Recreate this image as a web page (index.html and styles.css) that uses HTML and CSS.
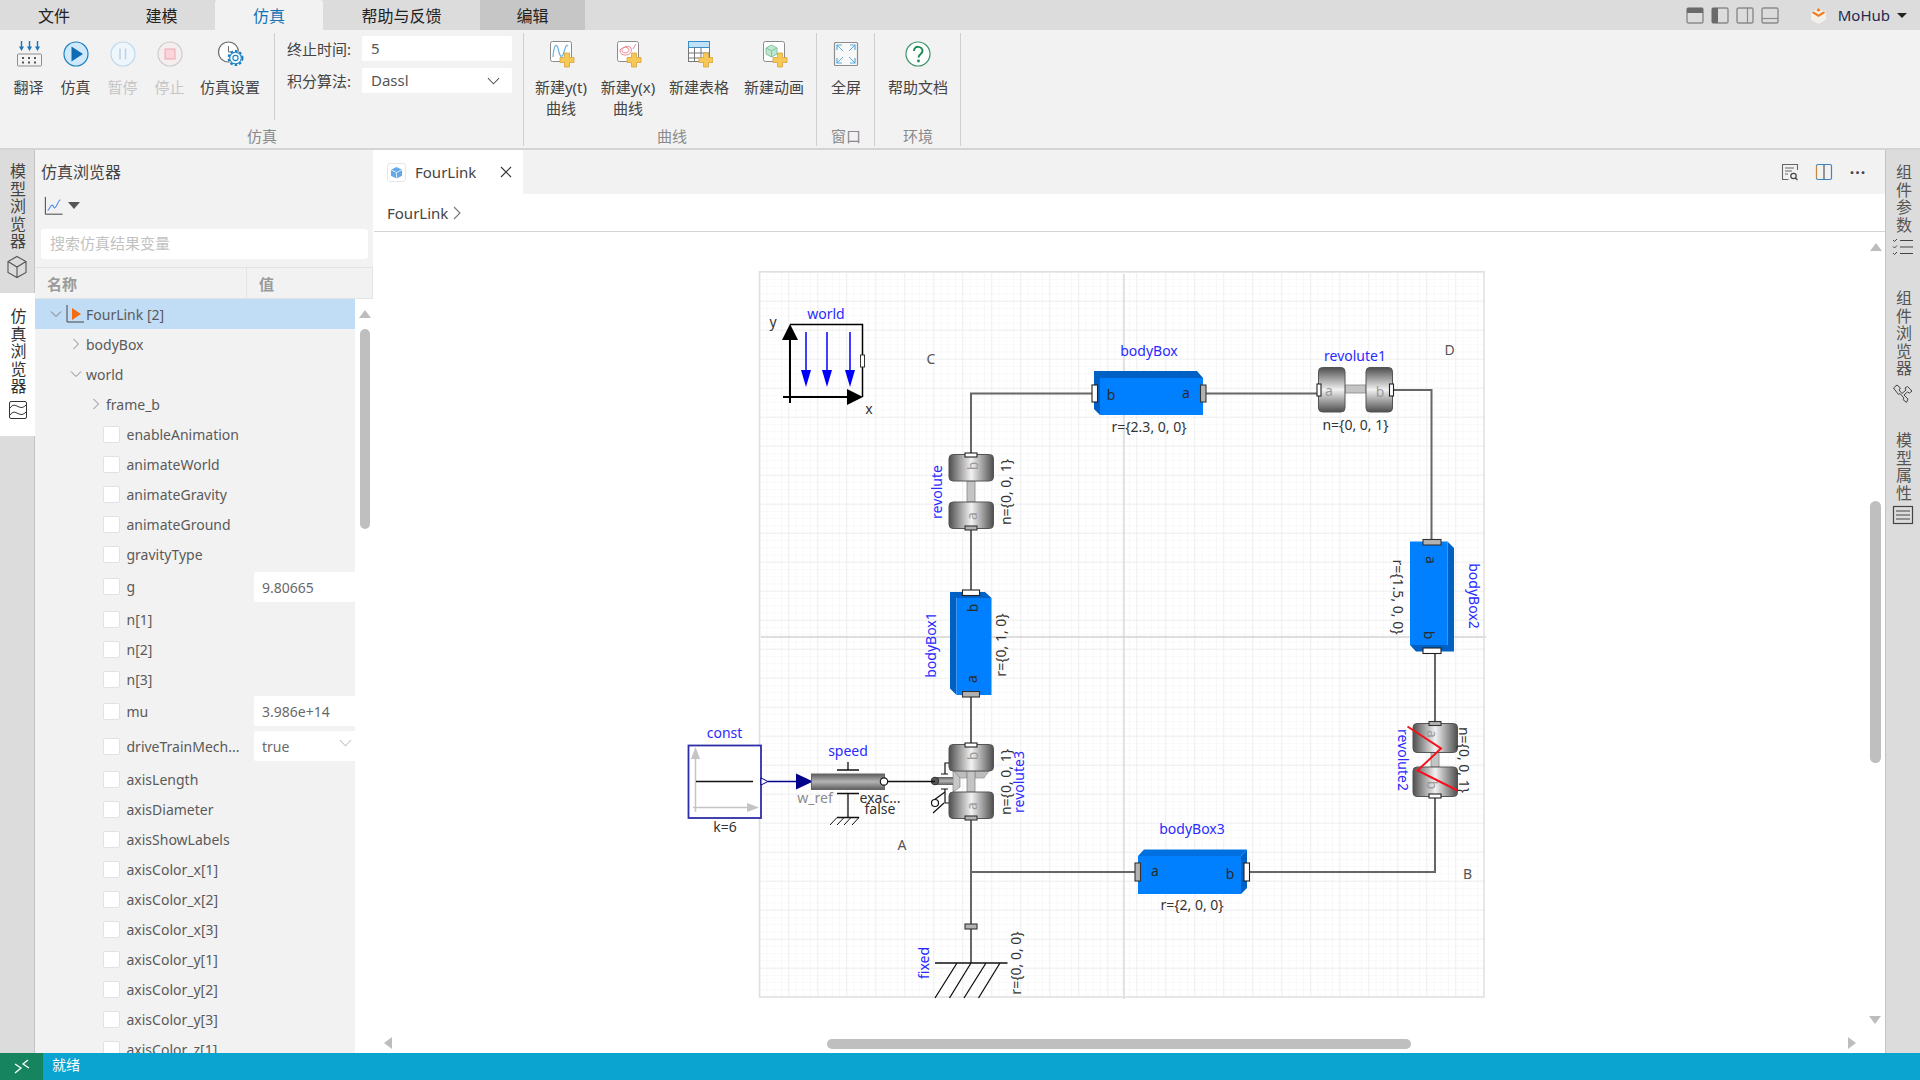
FILE: index.html
```html
<!DOCTYPE html>
<html lang="zh-CN">
<head>
<meta charset="utf-8">
<title>FourLink</title>
<link rel="stylesheet" href="styles.css">
</head>
<body>
<div class="app">
  <header class="menubar">
    <div class="menu-tab w108">文件</div>
    <div class="menu-tab w107">建模</div>
    <div class="menu-tab w108 active">仿真</div>
    <div class="menu-tab w157">帮助与反馈</div>
    <div class="menu-tab w105 edit">编辑</div>
    <div class="menu-right">
      <svg class="win-ic" viewBox="0 0 18 17"><rect x="1" y="1" width="16" height="15" rx="1.500" fill="none" stroke="#8a8a8a" stroke-width="1.400"/><rect x="1" y="1" width="16" height="5" fill="#6a6a6a"/></svg>
      <svg class="win-ic" viewBox="0 0 18 17"><rect x="1" y="1" width="16" height="15" rx="1.500" fill="none" stroke="#8a8a8a" stroke-width="1.400"/><rect x="1" y="1" width="6" height="15" fill="#6a6a6a"/></svg>
      <svg class="win-ic" viewBox="0 0 18 17"><rect x="1" y="1" width="16" height="15" rx="1.500" fill="none" stroke="#8a8a8a" stroke-width="1.400"/><path d="M11.500 1v15" stroke="#8a8a8a" stroke-width="1.200"/></svg>
      <svg class="win-ic" viewBox="0 0 18 17"><rect x="1" y="1" width="16" height="15" rx="1.500" fill="none" stroke="#8a8a8a" stroke-width="1.400"/><path d="M1 11.500h16" stroke="#8a8a8a" stroke-width="1.200"/></svg>
      <svg class="logo" viewBox="0 0 16 16"><path d="M8 1.500 15 5V12L8 16 1 12V5z" fill="#f3efeb"/><path d="M1.500 5.500 8 9.500l6.500-4-2-1.300L8 7 3.500 4.200z" fill="#f47c20"/><path d="M8 1 10 3 8 4.500 6 3z" fill="#f47c20"/></svg>
      <span class="hub">MoHub</span>
      <span class="caret-dark"></span>
    </div>
  </header>

  <section class="ribbon">
    <div class="group g-sim">
      <div class="group-body">
        <div class="rb-item w47 first">
          <svg class="rb-ic" viewBox="0 0 28 28"><rect x="2.500" y="14" width="24" height="12" rx="1" fill="#f4f4f4" stroke="#8d8d8d"/><g fill="#555"><rect x="7" y="17" width="2" height="2"/><rect x="13" y="17" width="2" height="2"/><rect x="19" y="17" width="2" height="2"/><rect x="7" y="21.500" width="2" height="2"/><rect x="13" y="21.500" width="2" height="2"/><rect x="19" y="21.500" width="2" height="2"/></g><g stroke="#1b75bb" stroke-width="1.400" fill="#1b75bb"><path d="M6.500 1v6M14.500 1v6M22.500 1v6"/><path d="M4 6.500h5L6.500 11zM12 6.500h5L14.500 11zM20 6.500h5L22.500 11z" stroke="none"/></g></svg>
          <span>翻译</span>
        </div>
        <div class="rb-item w47">
          <svg class="rb-ic" viewBox="0 0 28 28"><circle cx="14" cy="14" r="12" fill="#cfe9fb" stroke="#1d80c3" stroke-width="1.200"/><path d="M9.500 6.500 21 14 9.500 21.500z" fill="#0f6cb3"/></svg>
          <span>仿真</span>
        </div>
        <div class="rb-item w47 dim">
          <svg class="rb-ic" viewBox="0 0 28 28"><circle cx="14" cy="14" r="12" fill="#eff6fb" stroke="#bcd9ee" stroke-width="1.200"/><path d="M11 8.500v11M16.500 8.500v11" stroke="#bcd4e6" stroke-width="1.600"/></svg>
          <span>暂停</span>
        </div>
        <div class="rb-item w47 dim">
          <svg class="rb-ic" viewBox="0 0 28 28"><circle cx="14" cy="14" r="12" fill="#f6eeee" stroke="#cdcdcd" stroke-width="1.200"/><rect x="9" y="9" width="10" height="10" fill="#f9d4da" stroke="#eaaab4"/></svg>
          <span>停止</span>
        </div>
        <div class="rb-item w74">
          <svg class="rb-ic" viewBox="0 0 28 28"><circle cx="12.500" cy="12" r="10" fill="#fff" stroke="#6f6f6f" stroke-width="1.200"/><path d="M12.500 6v6h4" fill="none" stroke="#6f6f6f"/><circle cx="19.500" cy="18" r="7" fill="#f2f2f2" stroke="#1d80c3" stroke-width="2" stroke-dasharray="2.600 2"/><circle cx="19.500" cy="18" r="5.800" fill="#f4f9fd" stroke="#1d80c3" stroke-width="1.100"/><circle cx="19.500" cy="18" r="2.600" fill="#fff" stroke="#1d80c3" stroke-width="1.100"/></svg>
          <span>仿真设置</span>
        </div>
        <div class="sim-sep"></div>
        <div class="form">
          <div class="form-row"><label>终止时间:</label><div class="input">5</div></div>
          <div class="form-row"><label>积分算法:</label><div class="input select">Dassl<svg class="chev" viewBox="0 0 14 8"><path d="M1 1l6 6 6-6" fill="none" stroke="#555" stroke-width="1.100"/></svg></div></div>
        </div>
      </div>
      <div class="group-label">仿真</div>
    </div>
    <div class="group g-curve">
      <div class="group-body">
        <div class="rb-item w68">
          <svg class="rb-ic" viewBox="0 0 28 28"><rect x="3.500" y="1.500" width="21" height="20" rx="2" fill="#fff" stroke="#8a8a8a"/><path d="M6 17C7 3 10 3 11.500 10S15 19 17 12 19 6 21 5" fill="none" stroke="#68b3e3" stroke-width="1.200"/><path class="plus" d="M17.500 13h5v4.500h4.500v5h-4.500V27h-5v-4.500H13v-5h4.500z"/></svg>
          <span>新建y(t)<br>曲线</span>
        </div>
        <div class="rb-item w66">
          <svg class="rb-ic" viewBox="0 0 28 28"><rect x="3.500" y="1.500" width="21" height="20" rx="2" fill="#fff" stroke="#8a8a8a"/><path d="M6 10c3-4 9-3 9 0s-6 4-7 1 5-6 8-4 1 8-4 8-6-2-6-5M19 9l3-5" fill="none" stroke="#ec8a93" stroke-width="1"/><path class="plus" d="M17.500 13h5v4.500h4.500v5h-4.500V27h-5v-4.500H13v-5h4.500z"/></svg>
          <span>新建y(x)<br>曲线</span>
        </div>
        <div class="rb-item w76">
          <svg class="rb-ic" viewBox="0 0 28 28"><rect x="3.500" y="1.500" width="21" height="20" fill="#fff" stroke="#777"/><rect x="3.500" y="1.500" width="21" height="6" fill="#bfe2fa" stroke="#3c8cc6"/><path d="M3.500 13h21M3.500 18h21M9.500 7.500v14M16 7.500v14" stroke="#777" fill="none"/><path class="plus" d="M18.500 13h5v4.500h4.500v5h-4.500V27h-5v-4.500H14v-5h4.500z"/></svg>
          <span>新建表格</span>
        </div>
        <div class="rb-item w74">
          <svg class="rb-ic" viewBox="0 0 28 28"><rect x="3.500" y="1.500" width="21" height="20" rx="2" fill="#fff" stroke="#8a8a8a"/><path d="M11.500 5 17 8v6l-5.500 3L6 14V8z" fill="#bfe6cf" stroke="#83c4a0"/><path d="M6 8l5.500 3L17 8M11.500 11v6" fill="none" stroke="#83c4a0"/><path class="plus" d="M17.500 13h5v4.500h4.500v5h-4.500V27h-5v-4.500H13v-5h4.500z"/></svg>
          <span>新建动画</span>
        </div>
      </div>
      <div class="group-label">曲线</div>
    </div>
    <div class="group g-win">
      <div class="group-body">
        <div class="rb-item fill">
          <svg class="rb-ic" viewBox="0 0 28 28"><rect x="2.500" y="2.500" width="23" height="23" rx="1" fill="#f8f8f8" stroke="#8e8e8e" stroke-width="1.200"/><path d="M5 5l6 6M23 5l-6 6M5 23l6-6M23 23l-6-6" stroke="#58ade0" fill="none"/><path d="M5 10V5h5M23 10V5h-5M5 18v5h5M23 18v5h-5" stroke="#58ade0" fill="none" stroke-width="1.200"/></svg>
          <span>全屏</span>
        </div>
      </div>
      <div class="group-label">窗口</div>
    </div>
    <div class="group g-env">
      <div class="group-body">
        <div class="rb-item fill">
          <svg class="rb-ic" viewBox="0 0 28 28"><circle cx="14" cy="14" r="12" fill="#fff" stroke="#3b9468" stroke-width="1.200"/><path d="M10 11c0-6 8.500-5 8.500 0 0 3-4 3-4 6.500" fill="none" stroke="#1f8a56" stroke-width="2"/><circle cx="14.500" cy="21" r="1.400" fill="#1f8a56"/></svg>
          <span>帮助文档</span>
        </div>
      </div>
      <div class="group-label">环境</div>
    </div>
  </section>

  <main class="main">
    <aside class="rail rail-left">
      <div class="rail-item">
        <span class="vtext">模型浏览器</span>
        <svg class="rail-ic" viewBox="0 0 22 24"><path d="M11 1.500 20 6.500v11L11 22.500 2 17.500v-11zM2 6.500 11 12l9-5.500M11 12v10.500" fill="none" stroke="#555" stroke-width="1.100"/></svg>
      </div>
      <div class="rail-item on">
        <span class="vtext">仿真浏览器</span>
        <svg class="rail-ic" viewBox="0 0 22 22"><rect x="2.500" y="2.500" width="17" height="17" rx="1.500" fill="none" stroke="#333"/><path d="M3 9c3-4 5-3 8-1.500S16 9 19 6M3 16c3-4 5-3 8-1.500s5 1.500 8-1.500" fill="none" stroke="#333"/></svg>
      </div>
    </aside>

    <section class="panel">
      <h2 class="panel-title">仿真浏览器</h2>
      <div class="panel-tools">
        <svg class="plot-ic" viewBox="0 0 22 22"><path d="M1.500 1v19h19" fill="none" stroke="#333"/><path d="M4 16c2-1 3-6 5-6s1 4 3 3 3-7 6-9" fill="none" stroke="#4c8ce8" stroke-width="1.200"/></svg>
        <span class="caret-dark big"></span>
      </div>
      <div class="search">搜索仿真结果变量</div>
      <div class="thead"><div class="th th-name">名称</div><div class="th th-val">值</div></div>
      <div class="tree-wrap">
        <div class="tree">
          <div class="row sel lv0">
            <svg class="arrow" viewBox="0 0 12 12"><path d="M1 3.500 6 8.500l5-5" fill="none" stroke="#777"/></svg>
            <svg class="run-ic" viewBox="0 0 18 18"><path d="M1 0v17h17" fill="none" stroke="#444"/><path d="M6 3 15 9 6 15z" fill="#f26a12"/></svg>
            <span class="name">FourLink [2]</span>
          </div>
          <div class="row lv1"><svg class="arrow" viewBox="0 0 12 12"><path d="M3.500 1l5 5-5 5" fill="none" stroke="#888"/></svg><span class="name">bodyBox</span></div>
          <div class="row lv1"><svg class="arrow" viewBox="0 0 12 12"><path d="M1 3.500 6 8.500l5-5" fill="none" stroke="#888"/></svg><span class="name">world</span></div>
          <div class="row lv2"><svg class="arrow" viewBox="0 0 12 12"><path d="M3.500 1l5 5-5 5" fill="none" stroke="#888"/></svg><span class="name">frame_b</span></div>
          <div class="row leaf"><span class="cb"></span><span class="name">enableAnimation</span></div>
          <div class="row leaf"><span class="cb"></span><span class="name">animateWorld</span></div>
          <div class="row leaf"><span class="cb"></span><span class="name">animateGravity</span></div>
          <div class="row leaf"><span class="cb"></span><span class="name">animateGround</span></div>
          <div class="row leaf"><span class="cb"></span><span class="name">gravityType</span></div>
          <div class="row leaf tall g-row"><span class="cb"></span><span class="name">g</span><span class="val">9.80665</span></div>
          <div class="row leaf"><span class="cb"></span><span class="name">n[1]</span></div>
          <div class="row leaf"><span class="cb"></span><span class="name">n[2]</span></div>
          <div class="row leaf"><span class="cb"></span><span class="name">n[3]</span></div>
          <div class="row leaf tall"><span class="cb"></span><span class="name">mu</span><span class="val">3.986e+14</span></div>
          <div class="row leaf tall2"><span class="cb"></span><span class="name">driveTrainMech...</span><span class="val dd">true<svg class="chev2" viewBox="0 0 14 8"><path d="M1 1l6 6 6-6" fill="none" stroke="#c4c4c4" stroke-width="1.100"/></svg></span></div>
          <div class="row leaf"><span class="cb"></span><span class="name">axisLength</span></div>
          <div class="row leaf"><span class="cb"></span><span class="name">axisDiameter</span></div>
          <div class="row leaf"><span class="cb"></span><span class="name">axisShowLabels</span></div>
          <div class="row leaf"><span class="cb"></span><span class="name">axisColor_x[1]</span></div>
          <div class="row leaf"><span class="cb"></span><span class="name">axisColor_x[2]</span></div>
          <div class="row leaf"><span class="cb"></span><span class="name">axisColor_x[3]</span></div>
          <div class="row leaf"><span class="cb"></span><span class="name">axisColor_y[1]</span></div>
          <div class="row leaf"><span class="cb"></span><span class="name">axisColor_y[2]</span></div>
          <div class="row leaf"><span class="cb"></span><span class="name">axisColor_y[3]</span></div>
          <div class="row leaf"><span class="cb"></span><span class="name">axisColor_z[1]</span></div>
        </div>
        <div class="tree-scroll">
          <span class="tri up"></span>
          <div class="thumb-v"></div>
        </div>
      </div>
    </section>

    <section class="editor">
      <div class="tabstrip">
        <div class="doc-tab">
          <span class="doc-ic"><svg viewBox="0 0 14 14"><path d="M7 1 13 4v6.500L7 13.500 1 10.500V4z" fill="#65a8e6"/><path d="M1 4l6 3 6-3M7 7v6.500" fill="none" stroke="#fff" stroke-width=".8"/></svg></span>
          <span class="doc-name">FourLink</span>
          <svg class="close" viewBox="0 0 12 12"><path d="M1 1l10 10M11 1 1 11" stroke="#333" stroke-width="1.100"/></svg>
        </div>
        <div class="tab-tools">
          <svg class="tool" viewBox="0 0 18 18"><path d="M16.500 7V1.500h-15v15h6" fill="none" stroke="#666" stroke-width="1.100"/><path d="M4 5h9M4 8h7M4 11h3" stroke="#666"/><circle cx="12.500" cy="13" r="2.700" fill="none" stroke="#444" stroke-width="1.200"/><path d="M14.500 15l2 2" stroke="#444" stroke-width="1.300"/></svg>
          <svg class="tool" viewBox="0 0 18 18"><rect x="1.500" y="1.500" width="15" height="15" rx="1.500" fill="none" stroke="#3f86c6" stroke-width="1.200"/><path d="M9 1.500v15" stroke="#555" stroke-width="1.200"/><path d="M1.500 3v12" stroke="#c98a3c"/></svg>
          <span class="dots">···</span>
        </div>
      </div>
      <div class="crumb">FourLink<svg class="crumb-chev" viewBox="0 0 8 14"><path d="M1 1l6 6-6 6" fill="none" stroke="#777" stroke-width="1.100"/></svg></div>
      <div class="canvas">
        <svg class="diagram" width="1511" height="821" viewBox="374 232 1511 821">
          <defs>
            <pattern id="minor" x="759.300" y="271.700" width="7.250" height="7.250" patternUnits="userSpaceOnUse"><path d="M0 0V7.250M0 0H7.250" fill="none" stroke="#f3f3f3" stroke-width="1"/></pattern>
            <pattern id="major" x="759.300" y="271.700" width="29" height="29" patternUnits="userSpaceOnUse"><path d="M0 0V29M0 0H29" fill="none" stroke="#e6e6e6" stroke-width="1"/></pattern>
            <linearGradient id="gh" x1="0" x2="1" y1="0" y2="0"><stop offset="0" stop-color="#4e4e4e"/><stop offset=".5" stop-color="#f2f2f2"/><stop offset="1" stop-color="#4e4e4e"/></linearGradient>
            <linearGradient id="gv" x1="0" x2="0" y1="0" y2="1"><stop offset="0" stop-color="#4e4e4e"/><stop offset=".5" stop-color="#f2f2f2"/><stop offset="1" stop-color="#4e4e4e"/></linearGradient>
            <linearGradient id="gs" x1="0" x2="0" y1="0" y2="1"><stop offset="0" stop-color="#5e5e5e"/><stop offset=".5" stop-color="#b4b4b4"/><stop offset="1" stop-color="#5e5e5e"/></linearGradient>
          </defs>

          <rect x="759" y="271.500" width="725" height="725.500" fill="#fff"/>
          <rect x="759" y="271.500" width="725" height="725.500" fill="url(#minor)"/>
          <rect x="759" y="271.500" width="725" height="725.500" fill="url(#major)"/>
          <path d="M1124 274V999M761 637H1486" stroke="#d4d4d4" stroke-width="1.300" fill="none"/>
          <rect x="759.500" y="271.700" width="724.500" height="725.300" fill="none" stroke="#dfdfdf" stroke-width="1.500"/>

          <!-- wires -->
          <g fill="none" stroke="#666" stroke-width="2">
            <path d="M1092 393.500H971V455"/>
            <path d="M971 529V591"/>
            <path d="M971 697V745"/>
            <path d="M971 819V963"/>
            <path d="M971 872H1135"/>
            <path d="M1250 872H1435V797"/>
            <path d="M1435 722V653"/>
            <path d="M1206 393.500H1318"/>
            <path d="M1394 390H1431.500V540"/>
          </g>

          <!-- world -->
          <g>
            <path d="M790 324.500H862.500V397" fill="none" stroke="#000" stroke-width="1.500"/>
            <path d="M790 403V335M783 397H850" fill="none" stroke="#000" stroke-width="2"/>
            <path d="M790 324 798 340H782zM863 397 847 405V389z" fill="#000"/>
            <path d="M806 332V372M827 332V372M850 332V372" stroke="#0000ff" stroke-width="1.500"/>
            <path d="M801 370H811L806 387zM822 370H832L827 387zM845 370H855L850 387z" fill="#0000ff"/>
            <rect x="860.500" y="355" width="4" height="12" fill="#fff" stroke="#333"/>
            <text class="t blue" x="826" y="319">world</text>
            <text class="t" x="773" y="327">y</text>
            <text class="t" x="869" y="414">x</text>
            <text class="t grey" x="931" y="364">C</text>
          </g>

          <!-- bodyBox -->
          <path class="dark" d="M1094 371H1197L1203 378H1100V415L1094 409z"/>
          <rect class="front" x="1100" y="378" width="103" height="37"/>
          <rect class="pw" x="1092" y="385" width="5.500" height="17"/>
          <rect class="pg" x="1200.500" y="385" width="5.500" height="17"/>
          <text class="t dk" x="1111" y="400">b</text>
          <text class="t dk" x="1186" y="398">a</text>
          <text class="t blue" x="1149" y="356">bodyBox</text>
          <text class="t" x="1149" y="432">r={2.3, 0, 0}</text>

          <!-- revolute -->
          <rect class="stem" x="967" y="481" width="8" height="21"/>
          <rect class="joint" x="949" y="454.500" width="44.500" height="26.500" rx="4" fill="url(#gh)"/>
          <rect class="joint" x="949" y="502" width="44.500" height="26.500" rx="4" fill="url(#gh)"/>
          <rect class="pw" x="965" y="453" width="12" height="4"/>
          <rect class="pg" x="965" y="526" width="12" height="4"/>
          <text class="t ltr" transform="translate(978 466) rotate(-90)">b</text>
          <text class="t ltr" transform="translate(977 516) rotate(-90)">a</text>
          <text class="t blue" transform="translate(942 492) rotate(-90)">revolute</text>
          <text class="t" transform="translate(1011 492) rotate(-90)">n={0, 0, 1}</text>

          <!-- bodyBox1 -->
          <path class="dark" d="M950 592H985L991.500 598H956.500V695L950 688.500z"/>
          <rect class="front" x="956.500" y="598" width="35" height="97"/>
          <rect class="pw" x="962.500" y="590" width="17" height="5.500"/>
          <rect class="pg" x="962.500" y="691.500" width="17" height="5.500"/>
          <text class="t dk" transform="translate(978 608) rotate(-90)">b</text>
          <text class="t dk" transform="translate(977 679) rotate(-90)">a</text>
          <text class="t blue" transform="translate(936 645) rotate(-90)">bodyBox1</text>
          <text class="t" transform="translate(1006 645) rotate(-90)">r={0, 1, 0}</text>

          <!-- revolute3 -->
          <path d="M953 771H989L984 778H975V771H967V778H958z" fill="#bdbdbd" stroke="#8a8a8a" stroke-width=".6"/>
          <rect class="stem" x="967" y="771" width="8" height="21"/>
          <path d="M953 770 960 778V787L953 792z" fill="#c7c7c7" stroke="#777" stroke-width=".6"/>
          <rect x="935" y="777" width="18" height="8" fill="url(#gs)"/>
          <circle cx="935" cy="781" r="3.800" fill="#555" stroke="#333"/>
          <rect class="joint" x="949" y="744.500" width="44.500" height="26.500" rx="4" fill="url(#gh)"/>
          <rect class="joint" x="949" y="792" width="44.500" height="26.500" rx="4" fill="url(#gh)"/>
          <rect class="pw" x="965" y="743" width="12" height="4"/>
          <rect class="pg" x="965" y="816" width="12" height="4"/>
          <path d="M949 763H945V774M941 774H948M941 789H948M945 789V803H949" fill="none" stroke="#111" stroke-width="1.200"/>
          <path d="M933 813 944 803M934 800 945 792" stroke="#111" stroke-width="1.200"/>
          <circle cx="935" cy="803" r="3.500" fill="#fff" stroke="#111" stroke-width="1.200"/>
          <text class="t ltr" transform="translate(978 756) rotate(-90)">b</text>
          <text class="t ltr" transform="translate(977 806) rotate(-90)">a</text>
          <text class="t" transform="translate(1011 782) rotate(-90)">n={0, 0, 1}</text>
          <text class="t blue" transform="translate(1024 782) rotate(-90)">revolute3</text>

          <!-- const and speed -->
          <rect x="688.500" y="745.500" width="72.500" height="72.500" fill="#fff" stroke="#2d2da8" stroke-width="1.800"/>
          <path d="M695.500 812V755M693 807.500H750" fill="none" stroke="#c4c4c4" stroke-width="1.500"/>
          <path d="M695.500 747 700 759H691zM759 807.500 747 803V812z" fill="#c4c4c4"/>
          <path d="M696 781.500H753" stroke="#111" stroke-width="1.500"/>
          <path d="M761 778 768 781.500 761 785z" fill="#fff" stroke="#00008b"/>
          <path d="M768 781.500H798" stroke="#00008b" stroke-width="1.500"/>
          <path d="M796 773.500 813 781.500 796 789.500z" fill="#00008b"/>
          <rect x="811.500" y="774" width="73" height="15.500" fill="url(#gs)" stroke="#666"/>
          <path d="M837 770H859M848 762V770M837 793.500H859M848 793.500V817M837 817.500H859" fill="none" stroke="#111" stroke-width="1.300"/>
          <path d="M837 817.500 830 825M844 817.500 837 825M851 817.500 844 825M859 817.500 852 825" stroke="#111"/>
          <path d="M888 781.500H935" stroke="#111" stroke-width="1.500"/>
          <circle cx="884" cy="781.500" r="3.700" fill="#fff" stroke="#111" stroke-width="1.200"/>
          <text class="t blue" x="724.500" y="738">const</text>
          <text class="t" x="725" y="832">k=6</text>
          <text class="t blue" x="848" y="756">speed</text>
          <text class="t grey2" x="815" y="803">w_ref</text>
          <text class="t" x="880" y="803">exac...</text>
          <text class="t" x="880" y="814">false</text>
          <text class="t grey" x="902" y="850">A</text>

          <!-- fixed -->
          <rect class="pg" x="965" y="924" width="12" height="5"/>
          <path d="M935 963H1007.500M957 963 935 998M971 963 949.500 998M986 963 964 998M1000 963 978.500 998" fill="none" stroke="#111" stroke-width="1.300"/>
          <text class="t blue" transform="translate(929 963) rotate(-90)">fixed</text>
          <text class="t" transform="translate(1021 963) rotate(-90)">r={0, 0, 0}</text>

          <!-- bodyBox3 -->
          <path class="mid" d="M1138 856 1144 849.500H1247L1241 856z"/>
          <path class="dark" d="M1247 849.500V888L1241 894V856z"/>
          <rect class="front" x="1138" y="856" width="103" height="38"/>
          <rect class="pg" x="1135" y="863" width="5.500" height="18"/>
          <rect class="pw" x="1244" y="863" width="5.500" height="18"/>
          <text class="t dk" x="1155" y="876">a</text>
          <text class="t dk" x="1230" y="879">b</text>
          <text class="t blue" x="1192" y="834">bodyBox3</text>
          <text class="t" x="1192" y="910">r={2, 0, 0}</text>

          <!-- revolute1 -->
          <rect class="stem" x="1345" y="385" width="21" height="8"/>
          <rect class="joint" x="1318.500" y="367.500" width="26.500" height="44.500" rx="4" fill="url(#gv)"/>
          <rect class="joint" x="1366" y="367.500" width="26.500" height="44.500" rx="4" fill="url(#gv)"/>
          <rect class="pw" x="1317" y="384" width="4" height="12"/>
          <rect class="pw" x="1389.500" y="384" width="4" height="12"/>
          <text class="t ltr" x="1329" y="396">a</text>
          <text class="t ltr" x="1380" y="397">b</text>
          <text class="t blue" x="1355" y="361">revolute1</text>
          <text class="t" x="1355.500" y="430">n={0, 0, 1}</text>
          <text class="t grey" x="1449.500" y="355">D</text>

          <!-- bodyBox2 -->
          <path class="dark" d="M1447.500 541.500 1454 548V651.500H1416L1410 645H1447.500z"/>
          <rect class="front" x="1410" y="541.500" width="37.500" height="103.500"/>
          <rect class="pg" x="1423" y="539.500" width="18" height="5.500"/>
          <rect class="pw" x="1423" y="648" width="18" height="5.500"/>
          <text class="t dk" transform="translate(1426 560) rotate(90)">a</text>
          <text class="t dk" transform="translate(1424 635) rotate(90)">b</text>
          <text class="t blue" transform="translate(1469 596) rotate(90)">bodyBox2</text>
          <text class="t" transform="translate(1393 597) rotate(90)">r={1.5, 0, 0}</text>

          <!-- revolute2 -->
          <rect class="stem" x="1431" y="752" width="8" height="15"/>
          <rect class="joint" x="1413" y="723.500" width="44.500" height="29" rx="4" fill="url(#gh)"/>
          <rect class="joint" x="1413" y="767" width="44.500" height="29.500" rx="4" fill="url(#gh)"/>
          <rect class="pg" x="1429" y="721.500" width="12" height="4"/>
          <rect class="pw" x="1429" y="794" width="12" height="4"/>
          <text class="t ltr" transform="translate(1427 734) rotate(90)">a</text>
          <text class="t ltr" transform="translate(1427 785) rotate(90)">b</text>
          <text class="t" transform="translate(1459 760) rotate(90)">n={0, 0, 1}</text>
          <text class="t blue" transform="translate(1398 760) rotate(90)">revolute2</text>
          <path d="M1407.500 726.500 1441 748.500 1417.500 770.500 1457.500 790.500" fill="none" stroke="#f5121c" stroke-width="2"/>
          <text class="t grey" x="1467.500" y="878.500">B</text>
        </svg>
        <span class="tri up c-up"></span>
        <div class="thumb-cv"></div>
        <span class="tri down c-down"></span>
        <span class="tri left c-left"></span>
        <div class="thumb-ch"></div>
        <span class="tri right c-right"></span>
      </div>
    </section>

    <aside class="rail rail-right">
      <div class="rr-item r1">
        <span class="vtext">组件参数</span>
        <svg class="rail-ic" viewBox="0 0 22 18"><path d="M8 2.500H21M8 9H21M8 15.500H21" stroke="#444" stroke-width="1.200"/><path d="M1 2l1.500 1.500L5 1M1 8.500 2.500 10 5 7.500M1 15l1.500 1.500L5 14" fill="none" stroke="#444"/></svg>
      </div>
      <div class="rr-item r2">
        <span class="vtext">组件浏览器</span>
        <svg class="rail-ic" viewBox="0 0 22 20"><path d="M1.500 4 5 1 8.500 4 7 6l3 3.500 4-3.500-1-2 2.500-1.500L20 7l-2.500 2-2-1-3.500 3 4 4-1.500 3.500-3.500-3 1-1.500-4-4.500-1.500 1z" fill="none" stroke="#444"/></svg>
      </div>
      <div class="rr-item r3">
        <span class="vtext">模型属性</span>
        <svg class="rail-ic" viewBox="0 0 22 20"><rect x="1.500" y="1.500" width="19" height="17" fill="none" stroke="#444" stroke-width="1.200"/><path d="M4 6h14M4 10h14M4 14h14" stroke="#444"/></svg>
      </div>
    </aside>
  </main>

  <footer class="status">
    <div class="status-ic"><svg viewBox="0 0 16 16"><path d="M1 5l6 4-6 5M14 1 9 5l6 4" fill="none" stroke="#fff" stroke-width="1.300"/></svg></div>
    <span class="status-text">就绪</span>
  </footer>
</div>
</body>
</html>
```

FILE: styles.css
```css
* { box-sizing: border-box; }
html, body { margin: 0; height: 100%; overflow: hidden; }
body {
  font-family: "Noto Sans", "Noto Sans CJK SC", sans-serif;
  font-size: 14px;
  color: #444;
  background: #fff;
}
.app { display: flex; flex-direction: column; width: 1920px; height: 1080px; }

/* menu */
.menubar { display: flex; height: 30px; background: #dcdcdc; flex: none; }
.menu-tab { display: flex; align-items: center; justify-content: center; font-size: 16px; color: #222; height: 30px; }
.w108 { width: 108px; } .w107 { width: 107px; } .w157 { width: 157px; } .w105 { width: 105px; }
.menu-tab.active { background: #f2f2f2; color: #1673b5; border-radius: 3px 3px 0 0; }
.menu-tab.edit { background: #c6c6c6; }
.menu-right { margin-left: auto; display: flex; align-items: center; padding-right: 13px; }
.win-ic { width: 18px; height: 17px; margin-right: 7px; }
.logo { width: 17px; height: 17px; margin: 0 11px 0 24px; }
.hub { font-size: 15px; color: #1e2a50; }
.caret-dark { width: 0; height: 0; border-left: 5px solid transparent; border-right: 5px solid transparent; border-top: 5px solid #222; margin-left: 7px; }
.caret-dark.big { border-left-width: 6px; border-right-width: 6px; border-top: 7px solid #555; margin-left: 4px; }

/* ribbon */
.ribbon { display: flex; height: 120px; flex: none; background: #f2f2f2; border-bottom: 2px solid #d4d4d4; }
.group { display: flex; flex-direction: column; height: 117px; padding-top: 3px; position: relative; }
.group::after { content: ""; position: absolute; right: 0; top: 3px; bottom: 1px; width: 1px; background: #cfcfcf; }
.g-sim { width: 524px; } .g-curve { width: 293px; padding-left: 3px; } .g-win { width: 58px; } .g-env { width: 86px; }
.group-body { display: flex; flex: 1; min-height: 0; }
.group-label { text-align: center; font-size: 15px; line-height: 20px; color: #8a8a8a; height: 27px; padding-top: 6px; }
.rb-item { display: flex; flex-direction: column; align-items: center; text-align: center; font-size: 15px; line-height: 21px; color: #444; padding-top: 7px; flex: none; }
.rb-item.first { margin-left: 5px; }
.rb-item.fill { flex: 1; }
.rb-item.dim { color: #c6c6c6; }
.w47 { width: 47px; } .w74 { width: 74px; } .w68 { width: 68px; } .w66 { width: 66px; } .w76 { width: 76px; }
.rb-ic { width: 28px; height: 28px; margin-bottom: 9px; display: block; }
.plus { fill: #f6c957; stroke: #d6a23c; stroke-width: .8; }
.sim-sep { width: 1px; height: 87px; background: #cfcfcf; margin-left: 7px; }
.form { display: flex; flex-direction: column; gap: 7px; margin-left: 12px; padding-top: 3px; }
.form-row { display: flex; align-items: center; height: 25px; }
.form-row label { width: 75px; font-size: 15px; color: #444; white-space: nowrap; }
.input { width: 150px; height: 25px; background: #fff; border-radius: 2px; padding-left: 9px; font-size: 15px; line-height: 25px; color: #555; display: flex; align-items: center; }
.select { justify-content: space-between; padding-right: 12px; }
.chev { width: 13px; height: 8px; }

/* main */
.main { flex: 1; display: flex; min-height: 0; }
.rail { width: 35px; flex: none; background: #dcdcdc; }
.rail-left { border-right: 1px solid #c4c4c4; }
.rail-right { border-left: 1.500px solid #c4c4c4; background: #dcdcdc; }
.vtext { writing-mode: vertical-rl; text-orientation: upright; font-size: 16px; letter-spacing: 1.500px; line-height: 18px; color: #555; }
.rail-item { display: flex; flex-direction: column; align-items: center; height: 143px; padding-top: 13px; }
.rail-item.on { background: #fff; width: 35px; padding-top: 15px; }
.rail-item.on .vtext { color: #333; }
.rail-item.on .rail-ic { margin-top: 2px; }
.rail-left .rail-item:first-child .vtext { color: #444; }
.rail-ic { width: 22px; height: 24px; margin-top: 4px; display: block; }
.rr-item { display: flex; flex-direction: column; align-items: center; }
.r1 { height: 130px; padding-top: 14px; } .r2 { height: 130px; padding-top: 10px; } .r3 { height: 120px; padding-top: 22px; }
.rr-item .rail-ic { height: 20px; margin-top: 3px; }
.r2 .rail-ic { margin-top: 6px; }

/* panel */
.panel { width: 339px; flex: none; background: #f2f2f2; display: flex; flex-direction: column; overflow: hidden; border-right: 1px solid #fff; }
.panel-title { margin: 0; font-size: 16px; font-weight: 400; color: #444; line-height: 22px; padding: 11px 0 0 6px; height: 36px; }
.panel-tools { height: 43px; display: flex; align-items: center; padding: 0 0 4px 9px; }
.plot-ic { width: 20px; height: 20px; }
.search { margin: 0 5px 0 6px; height: 30px; background: #fff; border-radius: 3px; padding-left: 9px; line-height: 29px; font-size: 15px; color: #c2c2c2; flex: none; }
.thead { display: flex; height: 32px; margin-top: 8px; border: 1px solid #e4e4e4; border-left: 0; flex: none; }
.th { display: flex; align-items: center; font-size: 15px; font-weight: 700; color: #9a9a9a; }
.th-name { width: 212px; padding-left: 12px; border-right: 1px solid #e4e4e4; }
.th-val { flex: 1; padding-left: 12px; }
.tree-wrap { flex: 1; display: flex; min-height: 0; }
.tree { width: 320px; flex: none; overflow: hidden; }
.row { height: 30px; display: flex; align-items: center; white-space: nowrap; color: #5a5a5a; }
.row.tall { height: 34px; } .row.tall2 { height: 36px; }
.row.g-row { height: 35px; }
.row.sel { background: #c0ddf5; }
.lv0 { padding-left: 15px; } .lv1 { padding-left: 35px; } .lv2 { padding-left: 55px; }
.arrow { width: 12px; height: 12px; margin-right: 5px; flex: none; }
.lv0 .arrow { margin-right: 4px; }
.run-ic { width: 18px; height: 18px; margin-right: 2px; flex: none; }
.lv1 .name, .lv2 .name { margin-left: -1px; }
.leaf { padding-left: 68px; }
.cb { width: 17px; height: 17px; background: #fff; border: 1px solid #e2e2e6; border-radius: 2px; margin-right: 6.500px; flex: none; }
.val { margin-left: auto; width: 101px; height: 30px; background: #fff; border-radius: 2px 0 0 2px; padding-left: 8px; line-height: 31px; color: #6a6a6a; font-size: 14px; display: flex; justify-content: space-between; }
.val.dd { line-height: 32px; }
.chev2 { width: 13px; height: 8px; margin: 8px 3px 0 0; }
.tree-scroll { flex: 1; background: #fff; position: relative; }
.thumb-v { position: absolute; left: 5px; top: 30px; width: 10px; height: 200px; background: #bfbfbf; border-radius: 5px; }
.tri { display: block; width: 0; height: 0; position: absolute; }
.tri.up { border-left: 6px solid transparent; border-right: 6px solid transparent; border-bottom: 8px solid #bdbdbd; }
.tri.down { border-left: 6px solid transparent; border-right: 6px solid transparent; border-top: 8px solid #bdbdbd; }
.tri.left { border-top: 6px solid transparent; border-bottom: 6px solid transparent; border-right: 8px solid #bdbdbd; }
.tri.right { border-top: 6px solid transparent; border-bottom: 6px solid transparent; border-left: 8px solid #bdbdbd; }
.tree-scroll .tri.up { left: 4px; top: 11px; }

/* editor */
.editor { flex: 1; min-width: 0; display: flex; flex-direction: column; }
.tabstrip { height: 44px; background: #f2f2f2; display: flex; align-items: stretch; flex: none; }
.doc-tab { width: 149px; background: #fff; display: flex; align-items: center; padding: 0 11px 0 13px; }
.doc-ic { width: 19px; height: 19px; border: 1px solid #e6e6e6; border-radius: 3px; display: flex; align-items: center; justify-content: center; flex: none; }
.doc-ic svg { width: 13px; height: 13px; }
.doc-name { font-size: 15px; color: #444; margin-left: 9px; }
.close { width: 12px; height: 12px; margin-left: auto; }
.tab-tools { margin-left: auto; display: flex; align-items: center; padding-right: 17px; }
.tool { width: 18px; height: 18px; margin-right: 15px; }
.tool:first-child { margin-right: 16px; }
.dots { font-size: 16px; letter-spacing: 1px; color: #444; width: 20px; text-align: center; font-weight: 700; }
.crumb { height: 38px; background: #fff; border-bottom: 1.500px solid #d4d4d4; display: flex; align-items: center; padding-left: 13px; font-size: 15px; color: #444; flex: none; }
.crumb-chev { width: 8px; height: 14px; margin-left: 5px; }
.canvas { flex: 1; position: relative; background: #fff; overflow: hidden; }
.diagram { position: absolute; left: 0; top: 0; display: block; }
.t { font-family: "Noto Sans", sans-serif; font-size: 14px; fill: #333; text-anchor: middle; }
.t.blue { fill: #2a2aff; }
.t.grey { fill: #555; }
.t.grey2 { fill: #8c8c8c; }
.t.dk { fill: #2b2b2b; }
.t.ltr { fill: #9a9a9a; }
.dark { fill: #0060c4; }
.mid { fill: #0070e0; }
.front { fill: #0080ff; }
.pw { fill: #fff; stroke: #222; stroke-width: 1.100; }
.pg { fill: #b2b2b2; stroke: #333; stroke-width: 1.100; }
.joint { stroke: #555; stroke-width: 1; }
.stem { fill: #c4c4c4; stroke: #888; stroke-width: .8; }
.c-up { left: 1496px; top: 11px; }
.thumb-cv { position: absolute; left: 1496px; top: 269px; width: 11px; height: 262px; background: #bfbfbf; border-radius: 5.500px; }
.c-down { left: 1495px; top: 784px; }
.c-left { left: 10px; top: 805px; }
.thumb-ch { position: absolute; left: 453px; top: 807px; width: 584px; height: 10px; background: #bfbfbf; border-radius: 5px; }
.c-right { left: 1474px; top: 805px; }

/* status */
.status { height: 27px; flex: none; background: #0ba3cf; display: flex; align-items: center; color: #fff; }
.status-ic { width: 43px; height: 27px; background: #16855f; display: flex; align-items: center; justify-content: center; }
.status-ic svg { width: 16px; height: 16px; }
.status-text { margin-left: 9px; font-size: 14px; line-height: 24px; height: 27px; }
```
